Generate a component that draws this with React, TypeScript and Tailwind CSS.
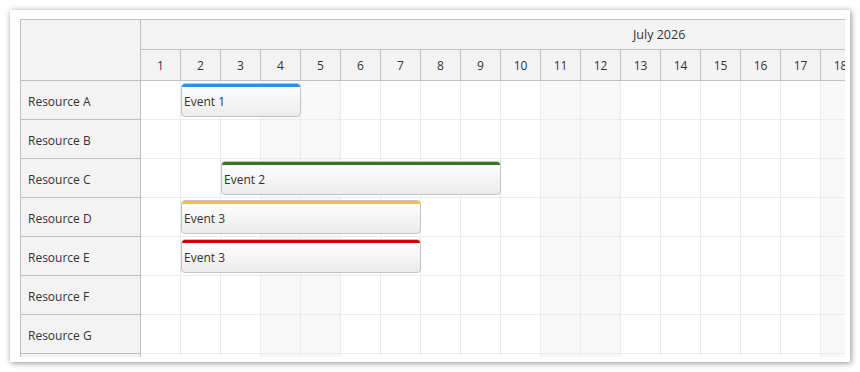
const days = Array.from({ length: 18 }, (_, i) => i + 1);
const weekend = [4, 5, 11, 12, 18];

const resources = [
  "Resource A",
  "Resource B",
  "Resource C",
  "Resource D",
  "Resource E",
  "Resource F",
  "Resource G",
  "",
];

const events = [
  { row: 0, start: 2, end: 4, text: "Event 1", color: "bg-[#2d8fe3]" },
  { row: 2, start: 3, end: 9, text: "Event 2", color: "bg-[#38761d]" },
  { row: 3, start: 2, end: 7, text: "Event 3", color: "bg-[#f1c232]" },
  { row: 4, start: 2, end: 7, text: "Event 3", color: "bg-[#cc0000]" },
];

export default function App() {
  return (
    <div
      className="w-[860px] h-[372px] bg-white overflow-hidden text-[#333] text-[12px]"
      style={{ fontFamily: '"Open Sans", "Noto Sans", sans-serif' }}
    >
      <div className="ml-[10px] mt-[10px] w-[840px] h-[352px] bg-white shadow-[1px_1px_6px_rgba(0,0,0,0.45)] pl-[10px] pt-[9px]">
        <div className="w-[825px] h-[338px] overflow-hidden border-l border-t border-[#c0c0c0] flex">
          {/* row headers */}
          <div className="w-[120px] shrink-0 border-r border-[#c0c0c0] bg-[#f3f3f3]">
            <div className="h-[61px] border-b border-[#c0c0c0]" />
            {resources.map((r, i) => (
              <div
                key={i}
                className="h-[39px] border-b border-[#c0c0c0] flex items-center pl-[7px] pt-[3px]"
              >
                {r}
              </div>
            ))}
          </div>

          {/* timeline */}
          <div className="shrink-0 w-[720px]">
            <div className="bg-[#f3f3f3]">
              <div className="h-[30px] border-b border-[#c0c0c0] flex items-center pl-[492px] pt-[2px] text-[12.5px]">
                July 2026
              </div>
              <div className="h-[31px] border-b border-[#c0c0c0] flex">
                {days.map((d) => (
                  <div
                    key={d}
                    className="w-[40px] shrink-0 border-r border-[#c0c0c0] flex items-center justify-center pt-[2px]"
                  >
                    {d}
                  </div>
                ))}
              </div>
            </div>

            <div className="relative">
              {resources.map((_, i) => (
                <div key={i} className="h-[39px] flex">
                  {days.map((d) => (
                    <div
                      key={d}
                      className={
                        "w-[40px] shrink-0 border-r border-b border-[#ebebeb] " +
                        (weekend.includes(d) ? "bg-[#f8f8f8]" : "bg-white")
                      }
                    />
                  ))}
                </div>
              ))}

              {events.map((e, i) => (
                <div
                  key={i}
                  className="absolute h-[34px] rounded-[4px] border border-[#c4c4c4] bg-gradient-to-b from-white to-[#ececec] overflow-hidden"
                  style={{
                    top: e.row * 39 + 2,
                    left: (e.start - 1) * 40,
                    width: (e.end - e.start + 1) * 40,
                  }}
                >
                  <div className={"h-[4px] -mx-px -mt-px " + e.color} />
                  <div className="h-[29px] flex items-center pl-[2px] pt-[1px] text-[12px]">
                    {e.text}
                  </div>
                </div>
              ))}
            </div>
          </div>
        </div>
      </div>
    </div>
  );
}
